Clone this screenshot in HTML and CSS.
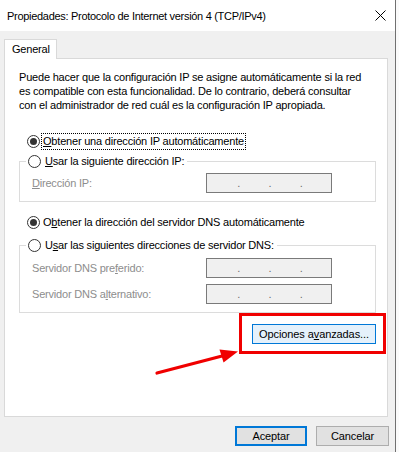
FILE: index.html
```html
<!DOCTYPE html>
<html lang="es">
<head>
    <meta charset="UTF-8">
    <meta name="viewport" content="width=device-width, initial-scale=1.0">
    <title>Propiedades: Protocolo de Internet versión 4 (TCP/IPv4)</title>
    <link rel="stylesheet" href="styles.css">
</head>
<body>
    <div class="window">
        <div class="titlebar">
            <span class="title">Propiedades: Protocolo de Internet versión 4 (TCP/IPv4)</span>
            <svg class="close" width="11" height="11" viewBox="0 0 11 11">
                <path d="M0.5 0.5 L10.5 10.5 M10.5 0.5 L0.5 10.5" stroke="#000" stroke-width="1"/>
            </svg>
        </div>

        <div class="dialog-body">
            <div class="tab">General</div>
            <div class="panel">
                <p class="intro">Puede hacer que la configuración IP se asigne automáticamente si la red<br>
                    es compatible con esta funcionalidad. De lo contrario, deberá consultar<br>
                    con el administrador de red cuál es la configuración IP apropiada.</p>

                <div class="radio-row">
                    <span class="radio checked"></span>
                    <span class="radio-label focused"><u>O</u>btener una dirección IP automáticamente</span>
                </div>

                <fieldset class="group group-ip">
                    <legend>
                        <span class="radio-row">
                            <span class="radio"></span>
                            <span class="radio-label"><u>U</u>sar la siguiente dirección IP:</span>
                        </span>
                    </legend>
                    <div class="field-row">
                        <span class="field-label"><u>D</u>irección IP:</span>
                        <div class="ip-box"><span></span><b>.</b><span></span><b>.</b><span></span><b>.</b><span></span></div>
                    </div>
                </fieldset>

                <div class="radio-row dns-auto">
                    <span class="radio checked"></span>
                    <span class="radio-label">O<u>b</u>tener la dirección del servidor DNS automáticamente</span>
                </div>

                <fieldset class="group group-dns">
                    <legend>
                        <span class="radio-row">
                            <span class="radio"></span>
                            <span class="radio-label">U<u>s</u>ar las siguientes direcciones de servidor DNS:</span>
                        </span>
                    </legend>
                    <div class="field-row">
                        <span class="field-label">Servidor DNS pre<u>f</u>erido:</span>
                        <div class="ip-box"><span></span><b>.</b><span></span><b>.</b><span></span><b>.</b><span></span></div>
                    </div>
                    <div class="field-row">
                        <span class="field-label">Servidor DNS a<u>l</u>ternativo:</span>
                        <div class="ip-box"><span></span><b>.</b><span></span><b>.</b><span></span><b>.</b><span></span></div>
                    </div>
                </fieldset>

                <div class="advanced-row">
                    <div class="highlight">
                        <button class="btn btn-advanced">Opciones a<u>v</u>anzadas...</button>
                    </div>
                </div>
            </div>

            <div class="footer">
                <button class="btn btn-default">Aceptar</button>
                <button class="btn">Cancelar</button>
            </div>
        </div>

        <!-- flecha roja de la captura -->
        <svg class="annotation" width="399" height="452" viewBox="0 0 399 452">
            <line x1="157" y1="373" x2="224" y2="355.5" stroke="#f00000" stroke-width="3.2" stroke-linecap="round"/>
            <polygon points="238,351.5 219.5,349.5 223.5,362.5" fill="#f00000"/>
        </svg>
    </div>
</body>
</html>
```

FILE: styles.css
```css
body {
    margin: 0;
    background: #fafafa;
    font-family: 'Liberation Sans', Arial, sans-serif;
    font-size: 11px;
    letter-spacing: -0.2px;
    color: #000;
}
.window {
    position: relative;
    width: 395px;
    height: 452px;
    border-right: 1px solid #707070;
    background: #f0f0f0;
}
.titlebar {
    height: 31px;
    background: #fff;
    display: flex;
    align-items: center;
    justify-content: space-between;
    padding: 0 9px 0 7px;
}
.title {
    font-size: 11px;
    letter-spacing: -0.3px;
    margin-top: 1px;
}
.close {
    display: block;
    margin-top: -1px;
}
.dialog-body {
    padding: 8px 0 0 4px;
}
.tab {
    position: relative;
    z-index: 1;
    display: inline-block;
    box-sizing: border-box;
    width: 53px;
    height: 20px;
    margin-bottom: -1px;
    padding-left: 7px;
    line-height: 19px;
    background: #fff;
    border: 1px solid #d9d9d9;
    border-bottom: none;
}
.panel {
    box-sizing: border-box;
    width: 384px;
    height: 359px;
    padding: 11px 11px 0 14px;
    background: #fff;
    border: 1px solid #d9d9d9;
}
.intro {
    margin: 0;
    line-height: 14px;
    white-space: nowrap;
}
.radio-row {
    display: flex;
    align-items: center;
    height: 16px;
    margin-top: 21px;
    padding-left: 8px;
}
.radio {
    box-sizing: border-box;
    width: 13px;
    height: 13px;
    border: 1px solid #333;
    border-radius: 50%;
    background: #fff;
    position: relative;
}
.radio.checked::after {
    content: '';
    position: absolute;
    left: 2px;
    top: 2px;
    width: 7px;
    height: 7px;
    border-radius: 50%;
    background: #333;
}
.radio-label {
    margin-left: 2px;
    padding: 0 1px;
    line-height: 15px;
}
.focused {
    outline: 1px dotted #000;
}
.group {
    margin: 4px 0 0 0;
    padding: 4px 43px 8px 6px;
    border: 1px solid #dcdcdc;
}
.group legend {
    padding: 0 2px;
}
.group legend .radio-row {
    margin-top: 0;
    padding-left: 0;
}
.group legend .radio-label {
    margin-left: 3px;
}
.field-row {
    display: flex;
    align-items: center;
    height: 20px;
    margin-left: 6px;
    color: #8d8d8d;
}
.field-row + .field-row {
    margin-top: 6px;
}
.field-label {
    width: 174px;
}
.ip-box {
    box-sizing: border-box;
    width: 126px;
    height: 20px;
    display: grid;
    grid-template-columns: 1fr auto 1fr auto 1fr auto 1fr;
    align-items: end;
    padding: 0 0 3px 2px;
    background: #f0f0f0;
    border: 1px solid #7a7a7a;
    color: #6d6d6d;
}
.ip-box b {
    font-weight: normal;
    line-height: 12px;
}
.dns-auto {
    margin-top: 12px;
}
.group-dns {
    margin-top: 7px;
    padding-top: 5px;
}
.advanced-row {
    display: flex;
    justify-content: flex-end;
    margin-right: -10px;
}
.highlight {
    padding: 8px 7px 7px 10px;
    border: 3px solid #f00000;
}
.btn {
    box-sizing: border-box;
    width: 73px;
    height: 20px;
    padding: 0;
    font-family: inherit;
    font-size: 11px;
    letter-spacing: -0.1px;
    color: #000;
    background: #e1e1e1;
    border: 1px solid #adadad;
}
.btn-advanced {
    display: block;
    width: 124px;
    background: #e5f1fb;
    border-color: #0078d7;
}
.btn-default {
    width: 72px;
    border: 2px solid #0078d7;
}
.footer {
    display: flex;
    justify-content: flex-end;
    gap: 9px;
    margin-top: 9px;
    padding-right: 6px;
}
.annotation {
    position: absolute;
    left: 0;
    top: 0;
    pointer-events: none;
}
```
